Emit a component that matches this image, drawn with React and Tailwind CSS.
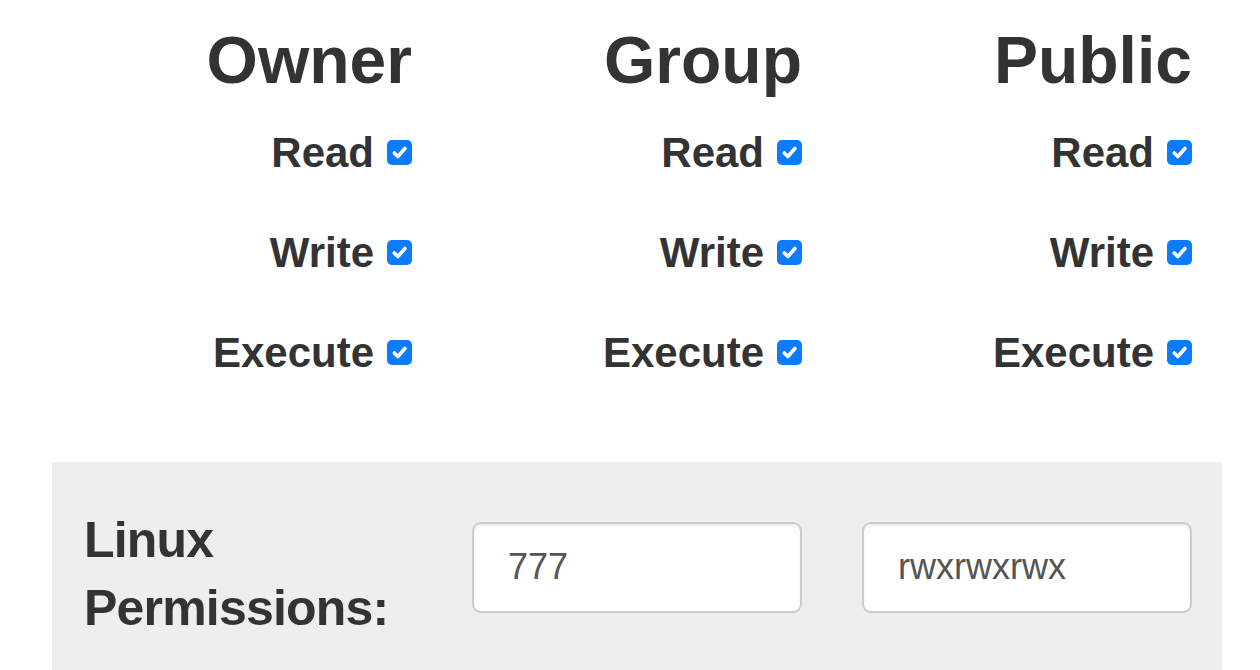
const groups = ['Owner', 'Group', 'Public'];
const perms = ['Read', 'Write', 'Execute'];

function Check() {
  return (
    <span className="w-[25px] h-[25px] rounded-[5px] bg-[#0b7bff] flex items-center justify-center shrink-0">
      <svg width="19" height="19" viewBox="0 0 16 16" fill="none">
        <path d="M3.6 8.4l3 3L12.6 4.6" stroke="#fff" strokeWidth="3" strokeLinecap="round" strokeLinejoin="round" />
      </svg>
    </span>
  );
}

export default function App() {
  return (
    <div className="h-[670px] bg-white text-[#333] font-['Liberation_Sans',Arial,sans-serif] overflow-hidden">
      <div className="ml-[52px] w-[1170px]">
        {/* Permission columns */}
        <div className="flex pt-[24px]">
          {groups.map((g) => (
            <div key={g} className="w-[390px] px-[30px] text-right">
              <h1 className="text-[66px] font-bold leading-[1.1]">{g}</h1>
              <div className="mt-[6px]">
                {perms.map((p) => (
                  <div key={p} className="h-[100px] flex items-center justify-end gap-[13px]">
                    <span className="text-[42px] font-bold leading-none">{p}</span>
                    <Check />
                  </div>
                ))}
              </div>
            </div>
          ))}
        </div>

        {/* Result well */}
        <div className="mt-[59px] bg-[#eeeeee] flex h-[208px]">
          <div className="w-[390px] px-[30px] pt-[44px]">
            <div className="text-[50px] font-bold leading-[68px] tracking-[-0.8px] pl-[2px]">
              Linux
              <br />
              Permissions:
            </div>
          </div>
          <div className="w-[390px] px-[30px] pt-[60px]">
            <input
              readOnly
              value="777"
              className="w-full h-[91px] bg-white border-2 border-[#ccc] rounded-[9px] px-[34px] text-[36px] text-[#555] shadow-[inset_0_2px_2px_rgba(0,0,0,0.075)] outline-none"
            />
          </div>
          <div className="w-[390px] px-[30px] pt-[60px]">
            <input
              readOnly
              value="rwxrwxrwx"
              className="w-full h-[91px] bg-white border-2 border-[#ccc] rounded-[9px] px-[34px] text-[36px] text-[#555] shadow-[inset_0_2px_2px_rgba(0,0,0,0.075)] outline-none"
            />
          </div>
        </div>
      </div>
    </div>
  );
}
